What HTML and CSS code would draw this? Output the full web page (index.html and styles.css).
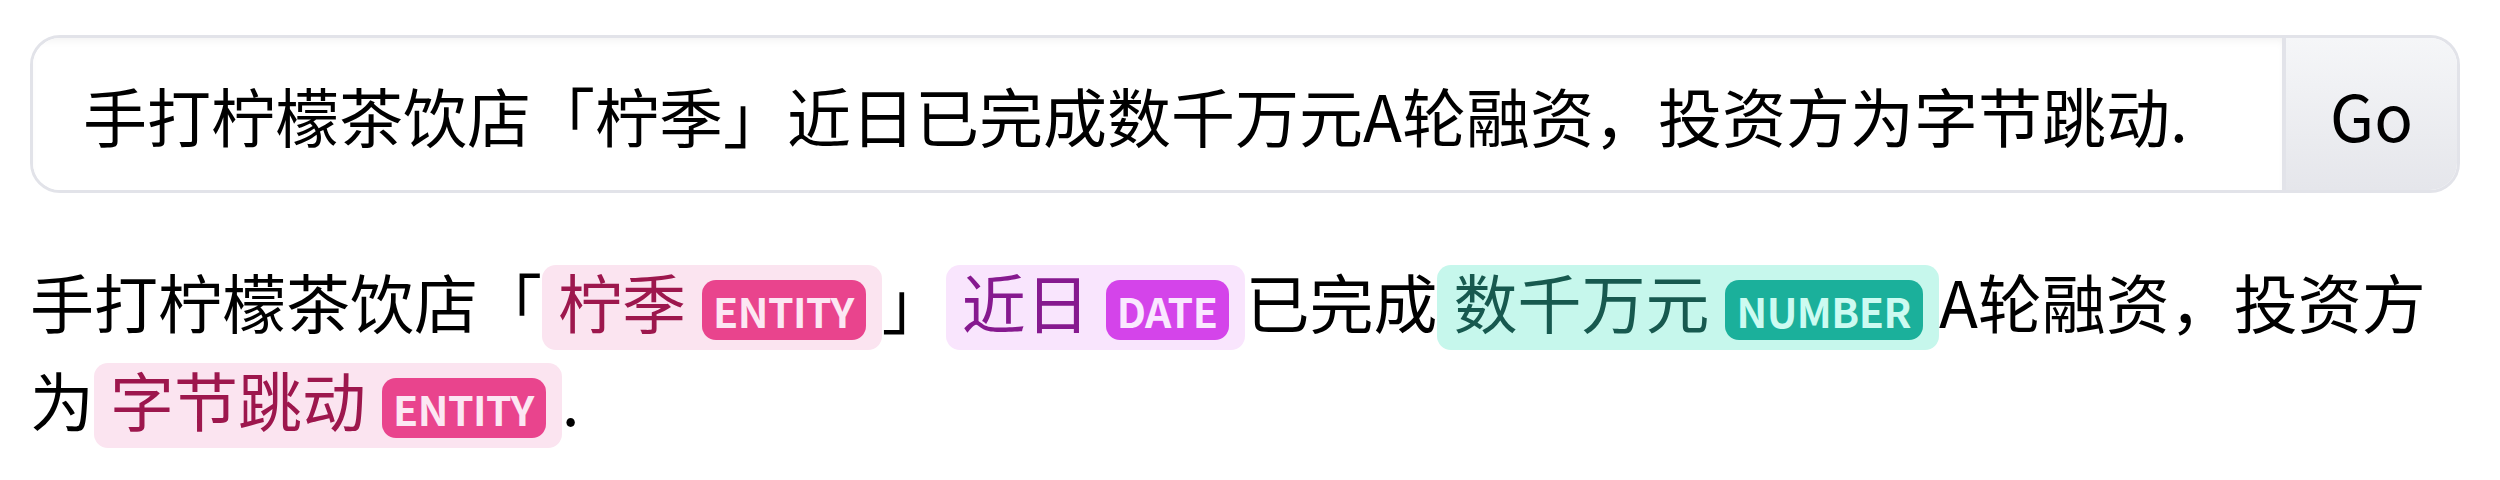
FILE: index.html
```html
<!DOCTYPE html>
<html lang="zh-CN">
<head>
<meta charset="utf-8">
<title>Token classification</title>
<link rel="stylesheet" href="styles.css">
</head>
<body>
<div class="page">
  <form class="query">
    <input class="query-input" type="text" value="手打柠檬茶饮店「柠季」近日已完成数千万元A轮融资，投资方为字节跳动.">
    <button class="go" type="button">Go</button>
  </form>
  <div class="output">手打柠檬茶饮店「<mark class="ent entity">柠季<span class="tag">ENTITY</span></mark>」<mark class="ent date">近日<span class="tag">DATE</span></mark>已完成<mark class="ent number">数千万元<span class="tag">NUMBER</span></mark>A轮融资，投资方<span class="keep">为<mark class="ent entity">字节跳动<span class="tag">ENTITY</span></mark></span>.</div>
</div>
</body>
</html>
```
FILE: styles.css
```css
html, body {
  margin: 0;
  padding: 0;
  background: #ffffff;
}

body {
  font-family: "Noto Sans CJK SC", "Noto Sans", sans-serif;
  color: #000000;
}

.page {
  padding: 35px 40px 0 30px;
}

.query {
  display: flex;
  height: 158px;
  box-sizing: border-box;
  border: 3px solid #e2e3e9;
  border-radius: 30px;
  overflow: hidden;
  margin: 0;
}

.query-input {
  flex: 1;
  min-width: 0;
  border: none;
  outline: none;
  margin: 0;
  padding: 0 0 0 50px;
  font-family: "Noto Sans CJK SC", "Noto Sans", sans-serif;
  font-size: 64px;
  color: #000000;
  background: #ffffff;
  box-shadow: inset 0 6px 10px -4px rgba(0, 0, 0, 0.06);
}

.go {
  width: 175px;
  flex: none;
  margin: 0;
  border: none;
  border-left: 4px solid #e2e3e9;
  background: linear-gradient(#f5f6f8, #e5e6eb);
  font-family: "Noto Sans CJK SC", "Noto Sans", sans-serif;
  font-size: 64px;
  color: #000000;
  padding: 0;
}

.output {
  margin-top: 59px;
  font-size: 64px;
  line-height: 97px;
}

.keep {
  white-space: nowrap;
}

.ent {
  display: inline-block;
  line-height: 70px;
  padding: 0 16px 10px;
  border-radius: 14px;
}

.tag {
  display: inline-block;
  font-size: 41px;
  font-weight: 700;
  letter-spacing: -0.5px;
  line-height: 60px;
  padding: 0 12px 0 11px;
  margin-left: 16px;
  border-radius: 14px;
}

.entity {
  background: #fbe4f0;
  color: #9d174d;
}
.entity .tag {
  background: #e9448d;
  color: #fce7f3;
}

.date {
  background: #f9e5fd;
  color: #86198f;
}
.date .tag {
  background: #d444ea;
  color: #fae8ff;
}

.number {
  background: #c6f7ec;
  color: #17594f;
}
.number .tag {
  background: #1bb09b;
  color: #ccfbf1;
}
```
